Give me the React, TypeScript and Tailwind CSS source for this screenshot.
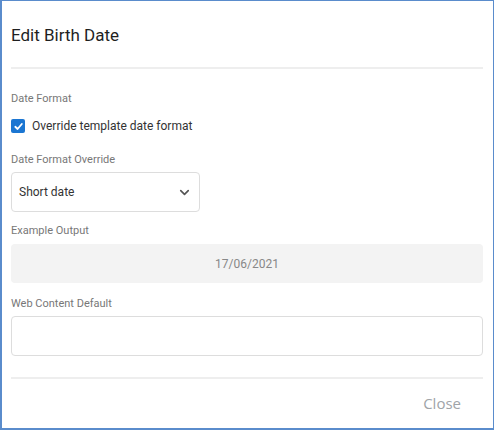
import { ChevronDown } from "lucide-react";

const label = "block text-[11px] leading-4 text-[#777777]";

export default function App() {
    return (
        <div
            className="w-[494px] h-[430px] bg-white border border-l-2 border-b-2 border-[#5a8ccc] pl-[9px] pr-[10px] flex flex-col"
            style={{ fontFamily: "Roboto, 'Noto Sans', sans-serif" }}
        >
            {/* header */}
            <div className="pt-[24px] pb-[22px]">
                <h1 className="text-[17px] leading-5 font-normal text-[#1f1f1f]">Edit Birth Date</h1>
            </div>
            <div className="h-[2px] bg-[#eeeeee]" />

            {/* body */}
            <span className={`${label} mt-[22px]`}>Date Format</span>

            <label className="mt-[9px] h-5 flex items-center gap-[7px]">
                <span className="w-[14px] h-[14px] rounded-[2px] bg-[#1b76d2] flex items-center justify-center">
                    <svg viewBox="0 0 12 12" className="w-[11px] h-[11px]" fill="none" stroke="white" strokeWidth="2" strokeLinecap="round" strokeLinejoin="round">
                        <path d="M2.5 6.3 L5 8.7 L9.6 3.3" />
                    </svg>
                </span>
                <span className="text-[12px] text-[#333333]">Override template date format</span>
            </label>

            <span className={`${label} mt-4`}>Date Format Override</span>
            <div className="mt-1 w-[189px] h-10 border border-[#dddddd] rounded-[4px] pl-[7px] pr-[7px] flex items-center justify-between">
                <span className="text-[12px] text-[#333333]">Short date</span>
                <ChevronDown size={15} strokeWidth={2.6} className="text-[#555555]" />
            </div>

            <span className={`${label} mt-[11px]`}>Example Output</span>
            <div className="mt-[5px] h-[39px] rounded-[4px] bg-[#f3f3f3] flex items-center justify-center">
                <span className="text-[12px] text-[#888888]">17/06/2021</span>
            </div>

            <span className={`${label} mt-[13px]`}>Web Content Default</span>
            <div className="mt-1 h-10 border border-[#dddddd] rounded-[4px]" />

            <div className="mt-[21px] h-[2px] bg-[#eeeeee]" />

            {/* footer */}
            <div className="flex-1 flex items-center justify-end pr-[22px]">
                <button
                    className="text-[15px] text-[#a0a4a8]"
                    style={{ fontFamily: "'Open Sans', sans-serif" }}
                >
                    Close
                </button>
            </div>
        </div>
    );
}
